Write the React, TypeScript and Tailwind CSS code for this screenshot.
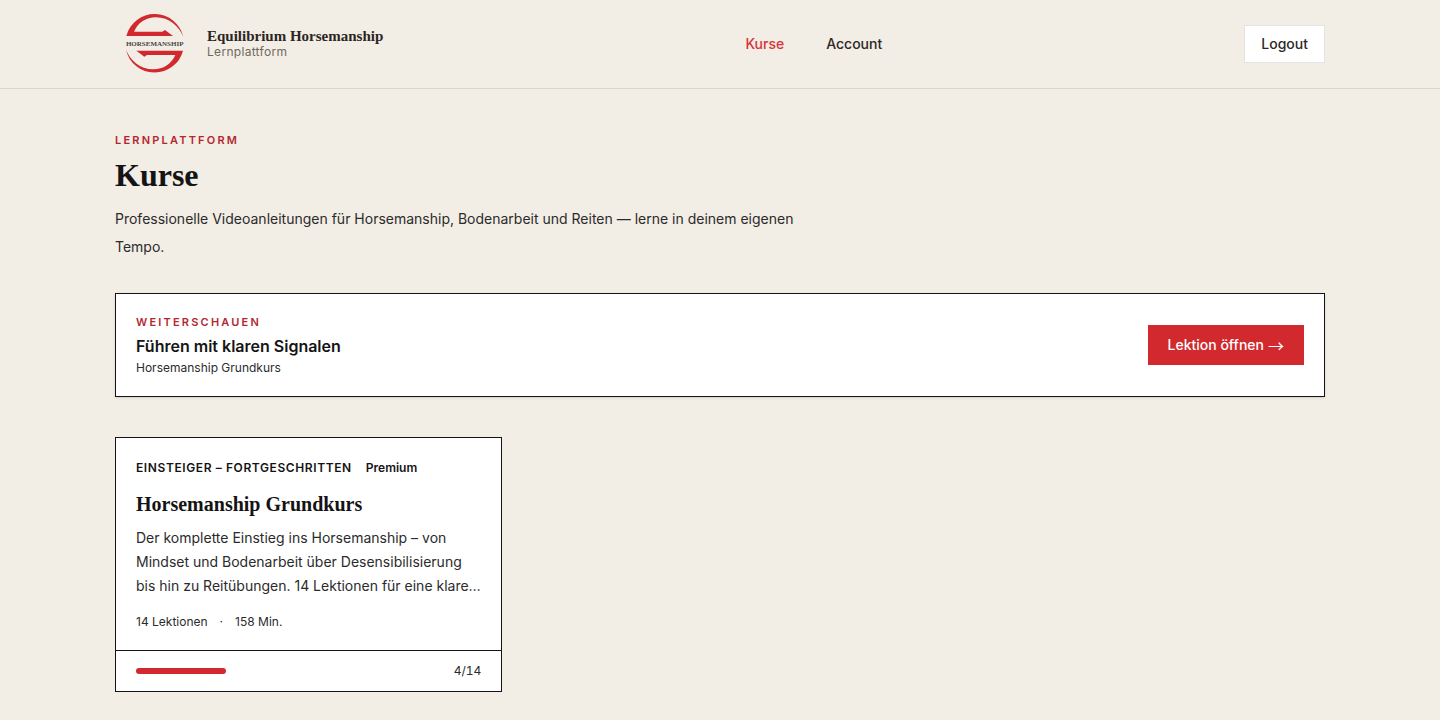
import React from 'react';

interface Course {
    title: string;
    level: string;
    access: string;
    description: string;
    lessons: number;
    minutes: number;
    completed: number;
}

const courses: Course[] = [
    {
        title: 'Horsemanship Grundkurs',
        level: 'Einsteiger – Fortgeschritten',
        access: 'Premium',
        description:
            'Der komplette Einstieg ins Horsemanship – von Mindset und Bodenarbeit über Desensibilisierung bis hin zu Reitübungen. 14 Lektionen für eine klare…',
        lessons: 14,
        minutes: 158,
        completed: 4,
    },
];

// Upper half of the emblem, the lower one is the same shape turned by 180°
const LOGO_HALF = 'M49 108 A88 88 0 0 1 220 111 C208 80 178 52 138 52 C108 52 84 68 72 95 L157 95 L165 90 L189 108 Z';

const Logo: React.FC<{ className?: string }> = ({ className }) => (
    <svg viewBox="15 12 240 240" className={className} role="img" aria-label="Horsemanship Logo">
        <g fill="#d2292f">
            <path d={LOGO_HALF} />
            <path d={LOGO_HALF} transform="rotate(180 134 130)" />
        </g>
        <text x="134" y="137" textAnchor="middle" fontSize="21" fill="#4a4443" className="font-['Liberation_Serif',serif] font-bold">
            HORSEMANSHIP
        </text>
    </svg>
);

const Header: React.FC = () => (
    <header className="border-b border-[#d9d4ce]">
        <div className="mx-auto flex max-w-[1250px] items-center justify-between px-5 py-1">
            <a href="#" className="flex items-center gap-3">
                <Logo className="size-20" />
                <span className="flex flex-col">
                    <span className="font-['Liberation_Serif',serif] text-[15px] leading-4 font-bold text-[#2b2623]">
                        Equilibrium Horsemanship
                    </span>
                    <span className="text-xs leading-4 tracking-wide text-[#6f6a5c]">Lernplattform</span>
                </span>
            </a>
            <nav className="flex items-center gap-[42px] text-sm font-medium">
                <a href="#" aria-current="page" className="text-[#d9343a]">Kurse</a>
                <a href="#" className="text-[#2b2826]">Account</a>
            </nav>
            <button type="button" className="border border-[#e5e3e2] bg-white px-4 py-2 text-sm font-medium text-[#2b2826]">
                Logout
            </button>
        </div>
    </header>
);

const CourseCard: React.FC<{ course: Course }> = ({ course }) => (
    <article className="flex flex-col border border-[#141414] bg-white">
        <div className="p-5">
            <div className="flex items-center gap-3.5 text-xs leading-5 font-semibold">
                <span className="tracking-wider uppercase">{course.level}</span>
                <span>{course.access}</span>
            </div>
            <h2 className="mt-3 font-['Liberation_Serif',serif] text-xl leading-7 font-bold">{course.title}</h2>
            <p className="mt-2 line-clamp-3 text-sm leading-6 text-[#2b2b2b]">{course.description}</p>
            <div className="mt-4 flex gap-3 text-xs leading-4 text-[#2b2b2b]">
                <span>{course.lessons} Lektionen</span>
                <span>·</span>
                <span>{course.minutes} Min.</span>
            </div>
        </div>
        <div className="flex items-center gap-1 border-t border-[#141414] px-5 py-3">
            <div className="h-1.5 flex-1 rounded-full">
                <div
                    className="h-full rounded-full bg-[#d2292f]"
                    style={{ width: `${(course.completed / course.lessons) * 100}%` }}
                />
            </div>
            <span className="text-xs leading-4 text-[#2b2b2b] tabular-nums">{course.completed}/{course.lessons}</span>
        </div>
    </article>
);

const App: React.FC = () => (
    <div className="min-h-screen bg-[#f2ede5] font-['Inter',sans-serif] text-[#141414]">
        <Header />
        <main className="mx-auto max-w-[1250px] px-5 pt-10 pb-7">
            <p className="text-[11px] leading-[22px] font-semibold tracking-[0.2em] text-[#b3282f] uppercase">Lernplattform</p>
            <h1 className="mt-1.5 font-['Liberation_Serif',serif] text-[32px] leading-9 font-bold">Kurse</h1>
            <p className="mt-3 max-w-[700px] text-sm leading-7 text-[#2b2b2b]">
                Professionelle Videoanleitungen für Horsemanship, Bodenarbeit und Reiten — lerne in deinem eigenen Tempo.
            </p>

            <section className="mt-8 flex items-center justify-between border border-[#141414] bg-white p-5 shadow-sm">
                <div>
                    <p className="text-[11px] leading-4 font-semibold tracking-[0.2em] text-[#b3282f] uppercase">Weiterschauen</p>
                    <h2 className="mt-1 text-base leading-6 font-semibold">Führen mit klaren Signalen</h2>
                    <p className="mt-0.5 text-xs leading-4 text-[#2b2b2b]">Horsemanship Grundkurs</p>
                </div>
                <a href="#" className="flex items-center gap-1 bg-[#d2292f] px-5 py-2.5 text-sm font-medium text-white">
                    <span>Lektion öffnen</span>
                    <span className="font-['Noto_Sans_CJK_JP',sans-serif] text-base leading-5 font-normal">→</span>
                </a>
            </section>

            <div className="mt-10 grid grid-cols-1 gap-6 md:grid-cols-2 lg:grid-cols-3">
                {courses.map((course) => (
                    <CourseCard key={course.title} course={course} />
                ))}
            </div>
        </main>
    </div>
);

export default App;
